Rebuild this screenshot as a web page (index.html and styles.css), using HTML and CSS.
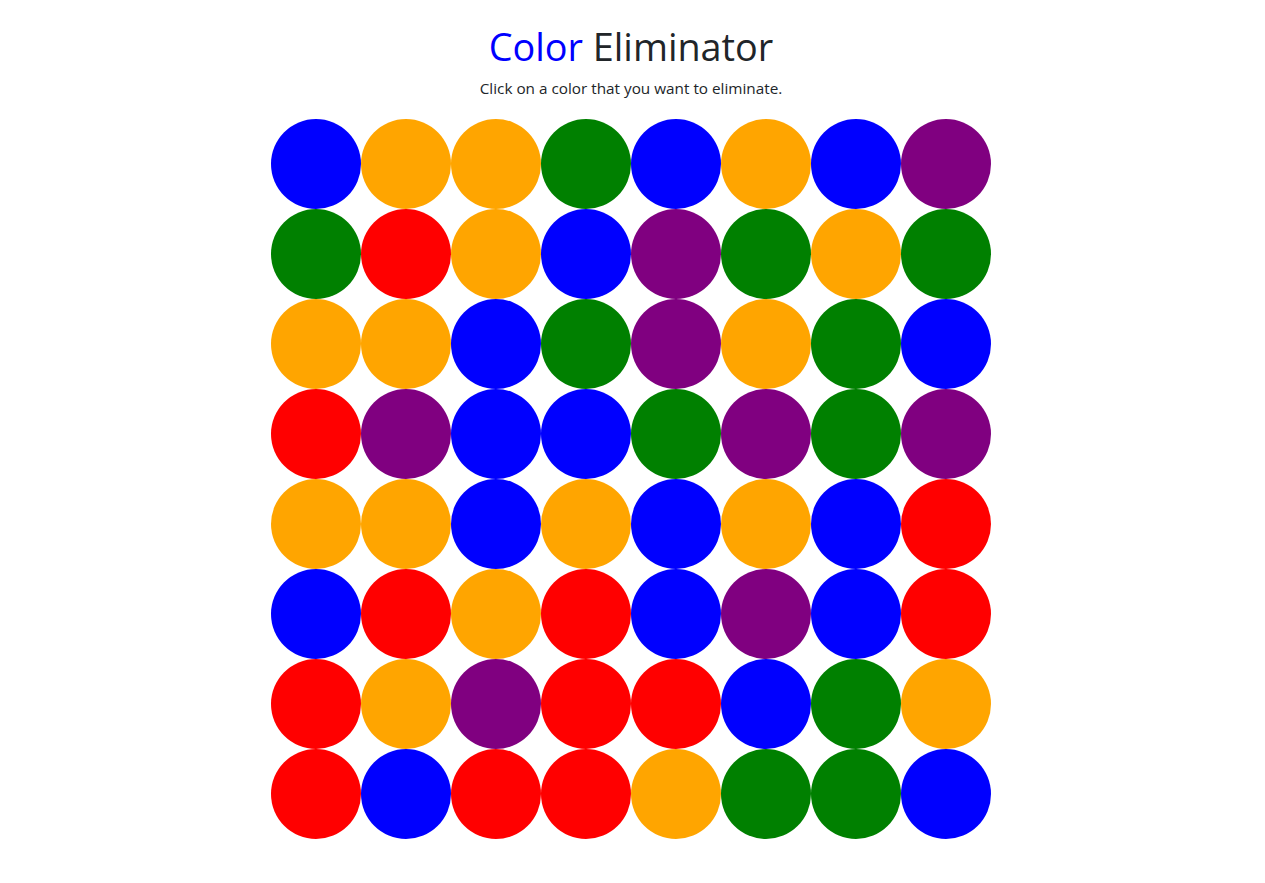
FILE: index.html
```html
<!DOCTYPE html>
<html lang="en">
<head>
<meta charset="utf-8">
<title>Color Eliminator</title>
<link rel="stylesheet" href="styles.css">
</head>
<body>
<main class="page">
  <h1 class="title"><span class="accent">Color</span> Eliminator</h1>
  <p class="subtitle">Click on a color that you want to eliminate.</p>
  <div class="board">
    <div class="dot b"></div><div class="dot o"></div><div class="dot o"></div><div class="dot g"></div><div class="dot b"></div><div class="dot o"></div><div class="dot b"></div><div class="dot p"></div>
    <div class="dot g"></div><div class="dot r"></div><div class="dot o"></div><div class="dot b"></div><div class="dot p"></div><div class="dot g"></div><div class="dot o"></div><div class="dot g"></div>
    <div class="dot o"></div><div class="dot o"></div><div class="dot b"></div><div class="dot g"></div><div class="dot p"></div><div class="dot o"></div><div class="dot g"></div><div class="dot b"></div>
    <div class="dot r"></div><div class="dot p"></div><div class="dot b"></div><div class="dot b"></div><div class="dot g"></div><div class="dot p"></div><div class="dot g"></div><div class="dot p"></div>
    <div class="dot o"></div><div class="dot o"></div><div class="dot b"></div><div class="dot o"></div><div class="dot b"></div><div class="dot o"></div><div class="dot b"></div><div class="dot r"></div>
    <div class="dot b"></div><div class="dot r"></div><div class="dot o"></div><div class="dot r"></div><div class="dot b"></div><div class="dot p"></div><div class="dot b"></div><div class="dot r"></div>
    <div class="dot r"></div><div class="dot o"></div><div class="dot p"></div><div class="dot r"></div><div class="dot r"></div><div class="dot b"></div><div class="dot g"></div><div class="dot o"></div>
    <div class="dot r"></div><div class="dot b"></div><div class="dot r"></div><div class="dot r"></div><div class="dot o"></div><div class="dot g"></div><div class="dot g"></div><div class="dot b"></div>
  </div>
</main>
</body>
</html>
```
FILE: styles.css
```css
html, body {
  margin: 0;
  padding: 0;
  background: #fff;
}
body {
  font-family: "Open Sans", "Noto Sans", sans-serif;
  color: #212529;
}
.page {
  display: flex;
  flex-direction: column;
  align-items: center;
  padding-top: 23px;
}
.title {
  margin: 0 3px 0 0;
  font-size: 37.8px;
  font-weight: 400;
  line-height: 48px;
}
.accent {
  color: #0000ff;
}
.subtitle {
  margin: 5px 3px 0 0;
  font-size: 15.3px;
  line-height: 24px;
}
.board {
  margin-top: 19px;
  margin-right: 3px;
  display: grid;
  grid-template-columns: repeat(8, 90px);
  grid-auto-rows: 90px;
}
.dot {
  border-radius: 50%;
}
.b { background: #0000ff; }
.o { background: #ffa500; }
.g { background: #008000; }
.p { background: #800080; }
.r { background: #ff0000; }
```
